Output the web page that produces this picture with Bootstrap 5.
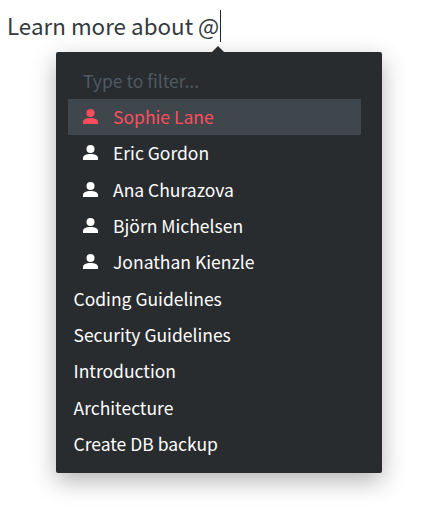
<!DOCTYPE html>
<html lang="en">
<head>
    <meta charset="UTF-8">
    <meta name="viewport" content="width=device-width, initial-scale=1.0">
    <title>Mention menu</title>
    <link href="https://cdn.jsdelivr.net/npm/bootstrap@5.3.3/dist/css/bootstrap.min.css" rel="stylesheet">
    <style>
        body { background: #fff; font-family: "Noto Sans CJK SC", Lato, sans-serif; }
        .editor-wrap { position: relative; height: 525px; padding: 10px 7px 0; }
        .editor-line { font-size: 22.4px; line-height: 30px; color: #343a40; margin: 0; display: flex; }
        .caret-bar { width: 1px; height: 32px; margin-left: 1px; background: #212529; }
        .mention-menu { position: absolute; left: 56px; top: 52px; width: 326px; height: 421px; padding: 12px 21px 0 12px; background: #282c2f; border-radius: 2px; box-shadow: 0 8px 24px rgba(0, 0, 0, .3); }
        .mention-menu::before { content: ""; position: absolute; left: 156px; top: -6px; border: 6px solid transparent; border-top: 0; border-bottom: 6px solid #282c2f; }
        .mention-filter { background: transparent; border: 0; outline: 0; width: 100%; height: 35px; padding: 0 15px 2px; font: inherit; font-size: 17.5px; color: #fff; }
        .mention-filter::placeholder { color: #505961; opacity: 1; }
        .mention-item { height: 36.33px; padding: 0 6px 1px 5.5px; font-size: 17.5px; line-height: 1; color: #fff; }
        .mention-item.person { padding-left: 14px; gap: 14px; }
        .mention-item.active-row { background: #3f464c; color: #ff4d5e; border-radius: 1px; }
        .mention-item svg { width: 17px; height: 17px; fill: currentColor; flex-shrink: 0; }
    </style>
</head>
<body>
    <div class="editor-wrap">
        <p class="editor-line">Learn more about @<span class="caret-bar"></span></p>
        <div class="mention-menu">
            <input class="mention-filter" type="text" placeholder="Type to filter...">
            <div id="menuItems"></div>
        </div>
    </div>
    <script src="https://cdn.jsdelivr.net/npm/bootstrap@5.3.3/dist/js/bootstrap.bundle.min.js"></script>
    <script>
        const people = ['Sophie Lane', 'Eric Gordon', 'Ana Churazova', 'Björn Michelsen', 'Jonathan Kienzle'];
        const pages = ['Coding Guidelines', 'Security Guidelines', 'Introduction', 'Architecture', 'Create DB backup'];
        const userIcon = '<svg viewBox="0 0 17 17"><circle cx="8.5" cy="5" r="4"/><path d="M1 16v-2.100c0-2.600 3.400-4 7.500-4s7.500 1.400 7.500 4v2.100z"/></svg>';
        const list = document.getElementById('menuItems');
        list.innerHTML = people.map((name, i) =>
            `<div class="mention-item person d-flex align-items-center${i === 0 ? ' active-row' : ''}">${userIcon}<span>${name}</span></div>`
        ).join('') + pages.map(name =>
            `<div class="mention-item d-flex align-items-center"><span>${name}</span></div>`
        ).join('');
    </script>
</body>
</html>
